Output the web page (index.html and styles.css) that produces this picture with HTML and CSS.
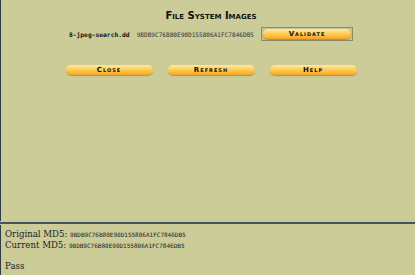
FILE: index.html
```html
<!DOCTYPE html>
<html lang="en">
<head>
  <meta charset="UTF-8" />
  <title>File System Images</title>
  <link rel="stylesheet" href="styles.css">
</head>
<body>
  <div class="top-frame">
    <h1 class="title">File System Images</h1>

    <div class="image-row">
      <span class="image-name">8-jpeg-search.dd</span>
      <span class="image-hash">9BDB9C76B80E90D155806A1FC7846DB5</span>
      <span class="btn-box"><button class="btn btn-wide">Validate</button></span>
    </div>

    <div class="actions">
      <button class="btn">Close</button>
      <button class="btn">Refresh</button>
      <button class="btn">Help</button>
    </div>
  </div>

  <div class="divider"></div>

  <div class="bottom-frame">
    <div class="md5-line">Original MD5: <span class="hash">9BDB9C76B80E90D155806A1FC7846DB5</span></div>
    <div class="md5-line">Current MD5: <span class="hash">9BDB9C76B80E90D155806A1FC7846DB5</span></div>
    <div class="md5-line result">Pass</div>
  </div>
</body>
</html>
```

FILE: styles.css
```css
body {
  margin: 0;
  background: #cccc99;
  font-family: "DejaVu Sans", sans-serif;
  color: #111;
  height: 275px;
  overflow: hidden;
}

/* top frame */
.top-frame {
  height: 221px;
  box-sizing: border-box;
  border-left: 1px solid #2f3a4a;
  padding: 10px 0 0 6px;
  display: flex;
  flex-direction: column;
  align-items: center;
}

.title {
  margin: 0;
  font-size: 10px;
  font-weight: bold;
  font-variant: small-caps;
  line-height: 12px;
  color: #111;
}

.image-row {
  margin-top: 5px;
  display: flex;
  align-items: center;
  gap: 7px;
}

.image-name {
  font-family: "DejaVu Sans Mono", monospace;
  font-size: 6.3px;
  font-weight: bold;
}

.image-hash {
  font-family: "DejaVu Sans Mono", monospace;
  font-size: 6.1px;
  color: #333;
}

.btn-box {
  display: flex;
  padding: 1px;
  border: 1px solid #8c8c6a;
  background: #c4c49a;
}

.btn {
  width: 87px;
  height: 10px;
  padding: 0;
  border: none;
  border-radius: 5px;
  background: linear-gradient(to bottom, #ffe9a8 0%, #ffd366 35%, #ffc040 65%, #f2a329 100%);
  box-shadow: 0 1px 1px rgba(120, 80, 0, 0.45);
  font-family: "DejaVu Sans", sans-serif;
  font-size: 7px;
  font-weight: bold;
  font-variant: small-caps;
  letter-spacing: 1px;
  line-height: 10px;
  color: #111;
}

.btn-wide {
  width: 88px;
}

.actions {
  margin-top: 24px;
  display: flex;
  gap: 15px;
}

/* frame divider */
.divider {
  height: 1px;
  background: #c2c2c2;
  border-bottom: 2px solid #4a5260;
  margin-bottom: 1px;
}

/* bottom frame */
.bottom-frame {
  height: 50px;
  border-left: 1px solid #2f3a4a;
  padding: 4px 0 0 4px;
  font-family: "DejaVu Serif", serif;
  font-size: 8.6px;
  line-height: 10px;
  color: #222;
}

.hash {
  font-family: "DejaVu Sans Mono", monospace;
  font-size: 6px;
}

.result {
  margin-top: 10px;
}
```
